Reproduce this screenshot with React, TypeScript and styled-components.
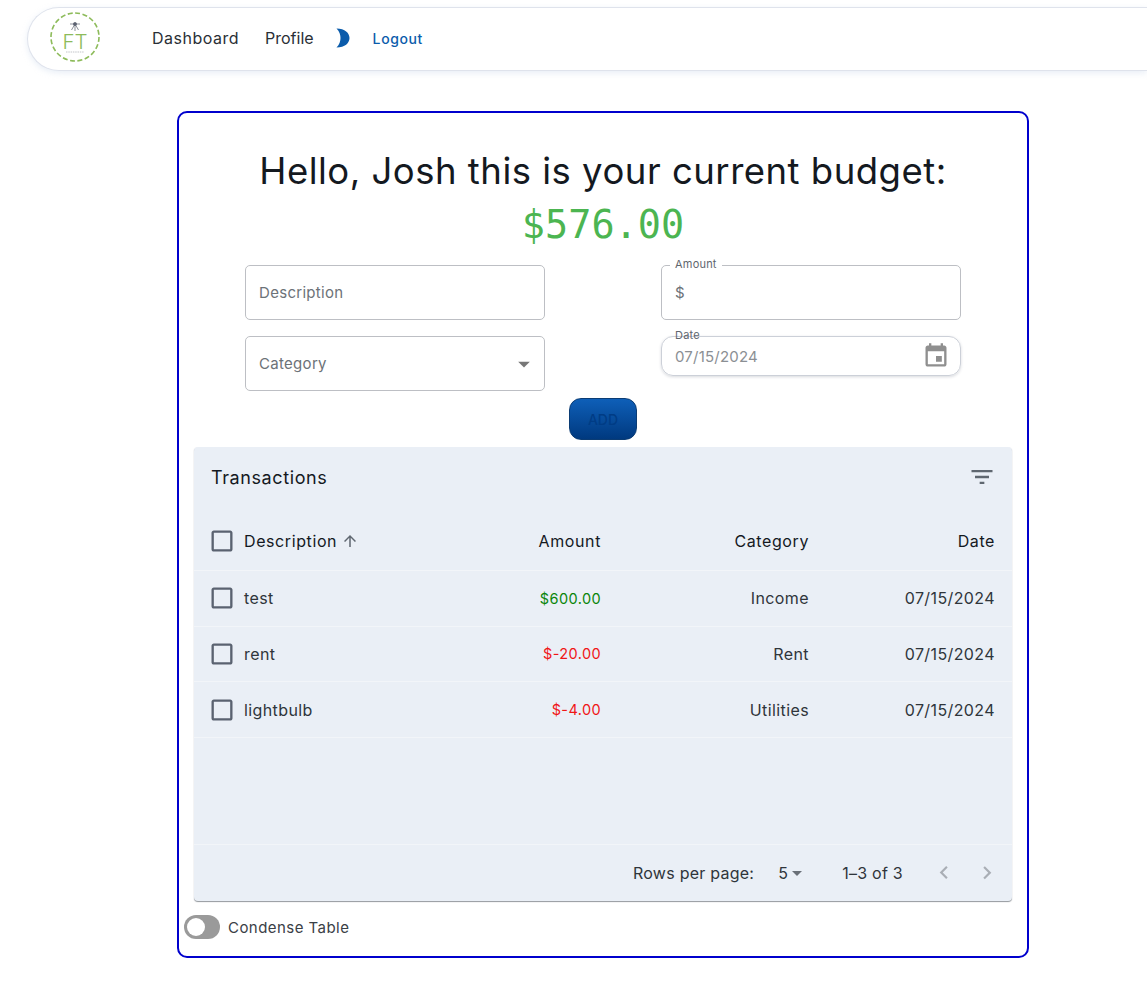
import styled, { createGlobalStyle } from "styled-components";

const GlobalStyle = createGlobalStyle`
  html, body {
    margin: 0;
    padding: 0;
    background: #fff;
    font-family: Inter, "Liberation Sans", sans-serif;
    color: #1c2025;
  }
  * { box-sizing: border-box; }
`;

const Nav = styled.nav`
  display: flex;
  align-items: center;
  height: 64px;
  margin: 7px 0 0 27px;
  padding: 0 0 2px 21px;
  border: 1px solid #dfe3ec;
  border-right: none;
  border-radius: 32px 0 0 32px;
  box-shadow: 0 2px 6px rgba(190, 205, 230, 0.35);
  background: #fff;
`;

const Logo = styled.svg`
  width: 52px;
  height: 52px;
  margin: 0 51px 3px 0;
  flex: none;
`;

const NavLink = styled.a<{ $tight?: boolean }>`
  font-size: 16px;
  letter-spacing: ${(p) => (p.$tight ? "0" : "0.5px")};
  color: #2a2f36;
  margin-right: ${(p) => (p.$tight ? "22px" : "26px")};
`;

const Moon = styled.svg`
  width: 14px;
  height: 20px;
  margin-right: 23px;
  flex: none;
`;

const Logout = styled.a`
  font-size: 14px;
  font-weight: 500;
  letter-spacing: 0.6px;
  color: #0b5cab;
`;

const Card = styled.main`
  width: 852px;
  height: 847px;
  margin: 40px 0 0 177px;
  padding: 0 15px;
  border: 2px solid #0000cd;
  border-radius: 10px;
`;

const Heading = styled.h1`
  margin: 34px 0 0;
  font-size: 36.5px;
  line-height: 48px;
  font-weight: 400;
  text-align: center;
  letter-spacing: 0.5px;
  color: #14191f;
`;

const Budget = styled.div`
  margin-top: 11px;
  height: 38px;
  font-family: "DejaVu Sans Mono", "Liberation Mono", monospace;
  font-size: 38.5px;
  line-height: 38px;
  text-align: center;
  color: #4cb551;
`;

const FormGrid = styled.div`
  display: grid;
  grid-template-columns: 300px 300px;
  column-gap: 116px;
  row-gap: 16px;
  justify-content: start;
  margin: 21px 0 0 51px;
`;

const OutlinedField = styled.div`
  position: relative;
  display: flex;
  align-items: center;
  justify-content: space-between;
  height: 55px;
  padding: 0 6px 0 13px;
  border: 1px solid #bdbfc4;
  border-radius: 5px;
  font-size: 15px;
  letter-spacing: 0.3px;
  color: #6c7278;
`;

const FloatingLabel = styled.span<{ $notched?: boolean }>`
  position: absolute;
  top: -8px;
  left: ${(p) => (p.$notched ? "8px" : "13px")};
  padding: ${(p) => (p.$notched ? "0 5px" : "0")};
  background: ${(p) => (p.$notched ? "#fff" : "transparent")};
  font-size: 11px;
  line-height: 13px;
  letter-spacing: 0.2px;
  color: #5f666e;
`;

const DateField = styled.div`
  position: relative;
  display: flex;
  align-items: center;
  justify-content: space-between;
  height: 40px;
  padding: 0 10px 0 13px;
  border: 1px solid #ccd0d8;
  border-radius: 12px;
  box-shadow: 0 1px 3px rgba(60, 70, 90, 0.2);
  font-size: 15px;
  letter-spacing: 0.2px;
  color: #8b8f94;
`;

const AddRow = styled.div`
  display: flex;
  justify-content: center;
  margin-top: 7px;
`;

const AddButton = styled.button`
  width: 68px;
  height: 42px;
  padding: 0;
  border: 1px solid #0b3c74;
  border-radius: 12px;
  background: linear-gradient(180deg, #0e5fb8 0%, #00397f 100%);
  font-family: inherit;
  font-size: 14px;
  font-weight: 500;
  color: #003c85;
`;

const TablePanel = styled.section`
  height: 454px;
  margin-top: 7px;
  display: flex;
  flex-direction: column;
  background: #eaeff6;
  border-radius: 4px;
  box-shadow: 0 1px 1px rgba(40, 50, 60, 0.5);
`;

const Toolbar = styled.div`
  display: flex;
  align-items: center;
  justify-content: space-between;
  height: 60px;
  padding: 0 16px 0 17px;
`;

const ToolbarTitle = styled.h2`
  margin: 0;
  font-size: 18px;
  font-weight: 400;
  letter-spacing: 0.6px;
  color: #14191f;
`;

const Row = styled.div<{ $head?: boolean }>`
  display: grid;
  grid-template-columns: 33px 200px 157px 208px 186px;
  align-items: center;
  height: ${(p) => (p.$head ? "64px" : "55.67px")};
  padding: ${(p) => (p.$head ? "4px 0 0 17px" : "0 0 0 17px")};
  border-bottom: 1px solid #f2f5f9;
  font-size: 16px;
  font-weight: 400;
  letter-spacing: ${(p) => (p.$head ? "0.6px" : "0.4px")};
  color: ${(p) => (p.$head ? "#14191f" : "#2f353b")};
`;

const Cell = styled.div<{ $right?: boolean; $tone?: string }>`
  display: flex;
  align-items: center;
  justify-content: ${(p) => (p.$right ? "flex-end" : "flex-start")};
  font-size: ${(p) => (p.$tone ? "14.5px" : "inherit")};
  color: ${(p) => p.$tone || "inherit"};
`;

const CheckIcon = styled.svg`
  width: 28px;
  height: 28px;
  margin-left: -3.5px;
  fill: #5a6270;
`;

const SortIcon = styled.svg`
  width: 18px;
  height: 18px;
  margin-left: 4px;
  fill: #5f6770;
`;

const EmptyArea = styled.div`
  flex: 1;
  border-bottom: 1px solid #f2f5f9;
`;

const Pagination = styled.div`
  display: flex;
  align-items: center;
  justify-content: flex-end;
  height: 56px;
  padding-right: 12px;
  font-size: 16px;
  letter-spacing: 0.25px;
  color: #2f353b;
`;

const PerPage = styled.span`
  display: flex;
  align-items: center;
  margin: 0 33px 0 24px;
`;

const Caret = styled.svg<{ $size?: number; $fill?: string }>`
  width: ${(p) => p.$size || 24}px;
  height: ${(p) => p.$size || 24}px;
  fill: ${(p) => p.$fill || "#6a7078"};
  flex: none;
`;

const PerPageCaret = styled(Caret)`
  margin-left: -3px;
`;

const Pager = styled.div`
  display: flex;
  gap: 17px;
  margin-left: 28px;
`;

const PageButton = styled.svg`
  width: 26px;
  height: 26px;
  fill: #a9aeb5;
  flex: none;
`;

const ToggleRow = styled.div`
  display: flex;
  align-items: center;
  gap: 8px;
  margin: 14px 0 0 -10px;
  font-size: 15px;
  letter-spacing: 0.45px;
  color: #3a4046;
`;

const ToggleTrack = styled.span`
  position: relative;
  display: block;
  width: 36px;
  height: 24px;
  border-radius: 12px;
  background: #9a9a9a;
`;

const ToggleThumb = styled.span`
  position: absolute;
  top: 3px;
  left: 3px;
  width: 18px;
  height: 18px;
  border-radius: 50%;
  background: #fff;
`;

interface Transaction {
  description: string;
  amount: string;
  tone: string;
  category: string;
  date: string;
}

const transactions: Transaction[] = [
  { description: "test", amount: "$600.00", tone: "#0a860a", category: "Income", date: "07/15/2024" },
  { description: "rent", amount: "$-20.00", tone: "#f01616", category: "Rent", date: "07/15/2024" },
  { description: "lightbulb", amount: "$-4.00", tone: "#f01616", category: "Utilities", date: "07/15/2024" },
];

function Checkbox() {
  return (
    <CheckIcon viewBox="0 0 24 24">
      <path d="M19 5v14H5V5h14m0-2H5c-1.1 0-2 .9-2 2v14c0 1.1.9 2 2 2h14c1.1 0 2-.9 2-2V5c0-1.1-.9-2-2-2z" />
    </CheckIcon>
  );
}

function App() {
  return (
    <>
      <GlobalStyle />
      <Nav>
        <Logo viewBox="0 0 52 52">
          <circle cx="26" cy="26" r="24" fill="none" stroke="#8dbb5a" strokeWidth="1.6" strokeDasharray="5 2.5" />
          <g stroke="#5b6270" strokeWidth="0.7" fill="#5b6270">
            <circle cx="26" cy="13" r="1.6" />
            <path d="M26 13v7M26 13l-3.5 6M26 13l3.5 6M26 13h-5M26 13h5" fill="none" />
          </g>
          <text x="26" y="38" textAnchor="middle" fontFamily="Inter, sans-serif" fontSize="20.5" fontWeight="300" fill="#8dbb5a">
            FT
          </text>
          <path d="M17 41h18" stroke="#9aa0a6" strokeWidth="0.6" strokeDasharray="1.5 0.8" />
        </Logo>
        <NavLink>Dashboard</NavLink>
        <NavLink $tight>Profile</NavLink>
        <Moon viewBox="0 0 14 20">
          <path d="M.5.5C9 .5 13.5 5 13.5 10S9 19.5.5 19.5C3.5 16.5 4.5 13 4.5 10S3.5 3.5.5.5z" fill="#0b5cab" />
        </Moon>
        <Logout>Logout</Logout>
      </Nav>

      <Card>
        <Heading>Hello, Josh this is your current budget:</Heading>
        <Budget>$576.00</Budget>

        <FormGrid>
          <OutlinedField>Description</OutlinedField>
          <OutlinedField>
            <FloatingLabel $notched>Amount</FloatingLabel>$
          </OutlinedField>
          <OutlinedField>
            Category
            <Caret viewBox="0 0 24 24" $size={28} $fill="#777">
              <path d="M7 10l5 5 5-5z" />
            </Caret>
          </OutlinedField>
          <DateField>
            <FloatingLabel>Date</FloatingLabel>
            07/15/2024
            <Caret viewBox="0 0 24 24" $size={28} $fill="#8f8f8f">
              <path d="M17 12h-5v5h5v-5zM16 1v2H8V1H6v2H5c-1.11 0-1.99.9-1.99 2L3 19c0 1.1.89 2 2 2h14c1.1 0 2-.9 2-2V5c0-1.1-.9-2-2-2h-1V1h-2zm3 18H5V8h14v11z" />
            </Caret>
          </DateField>
        </FormGrid>

        <AddRow>
          <AddButton>ADD</AddButton>
        </AddRow>

        <TablePanel>
          <Toolbar>
            <ToolbarTitle>Transactions</ToolbarTitle>
            <Caret viewBox="0 0 24 24" $size={28} $fill="#5f6770">
              <path d="M10 18h4v-2h-4v2zM3 6v2h18V6H3zm3 7h12v-2H6v2z" />
            </Caret>
          </Toolbar>

          <Row $head>
            <Checkbox />
            <Cell>
              Description
              <SortIcon viewBox="0 0 24 24">
                <path d="M4 12l1.41 1.41L11 7.83V20h2V7.83l5.58 5.59L20 12l-8-8-8 8z" />
              </SortIcon>
            </Cell>
            <Cell $right>Amount</Cell>
            <Cell $right>Category</Cell>
            <Cell $right>Date</Cell>
          </Row>

          {transactions.map((t) => (
            <Row key={t.description}>
              <Checkbox />
              <Cell>{t.description}</Cell>
              <Cell $right $tone={t.tone}>
                {t.amount}
              </Cell>
              <Cell $right>{t.category}</Cell>
              <Cell $right>{t.date}</Cell>
            </Row>
          ))}

          <EmptyArea />

          <Pagination>
            Rows per page:
            <PerPage>
              5
              <PerPageCaret viewBox="0 0 24 24">
                <path d="M7 10l5 5 5-5z" />
              </PerPageCaret>
            </PerPage>
            1–3 of 3
            <Pager>
              <PageButton viewBox="0 0 24 24">
                <path d="M15.41 16.09l-4.58-4.59 4.58-4.59L14 5.5l-6 6 6 6z" />
              </PageButton>
              <PageButton viewBox="0 0 24 24">
                <path d="M8.59 16.34l4.58-4.59-4.58-4.59L10 5.75l6 6-6 6z" />
              </PageButton>
            </Pager>
          </Pagination>
        </TablePanel>

        <ToggleRow>
          <ToggleTrack>
            <ToggleThumb />
          </ToggleTrack>
          Condense Table
        </ToggleRow>
      </Card>
    </>
  );
}

export default App;
